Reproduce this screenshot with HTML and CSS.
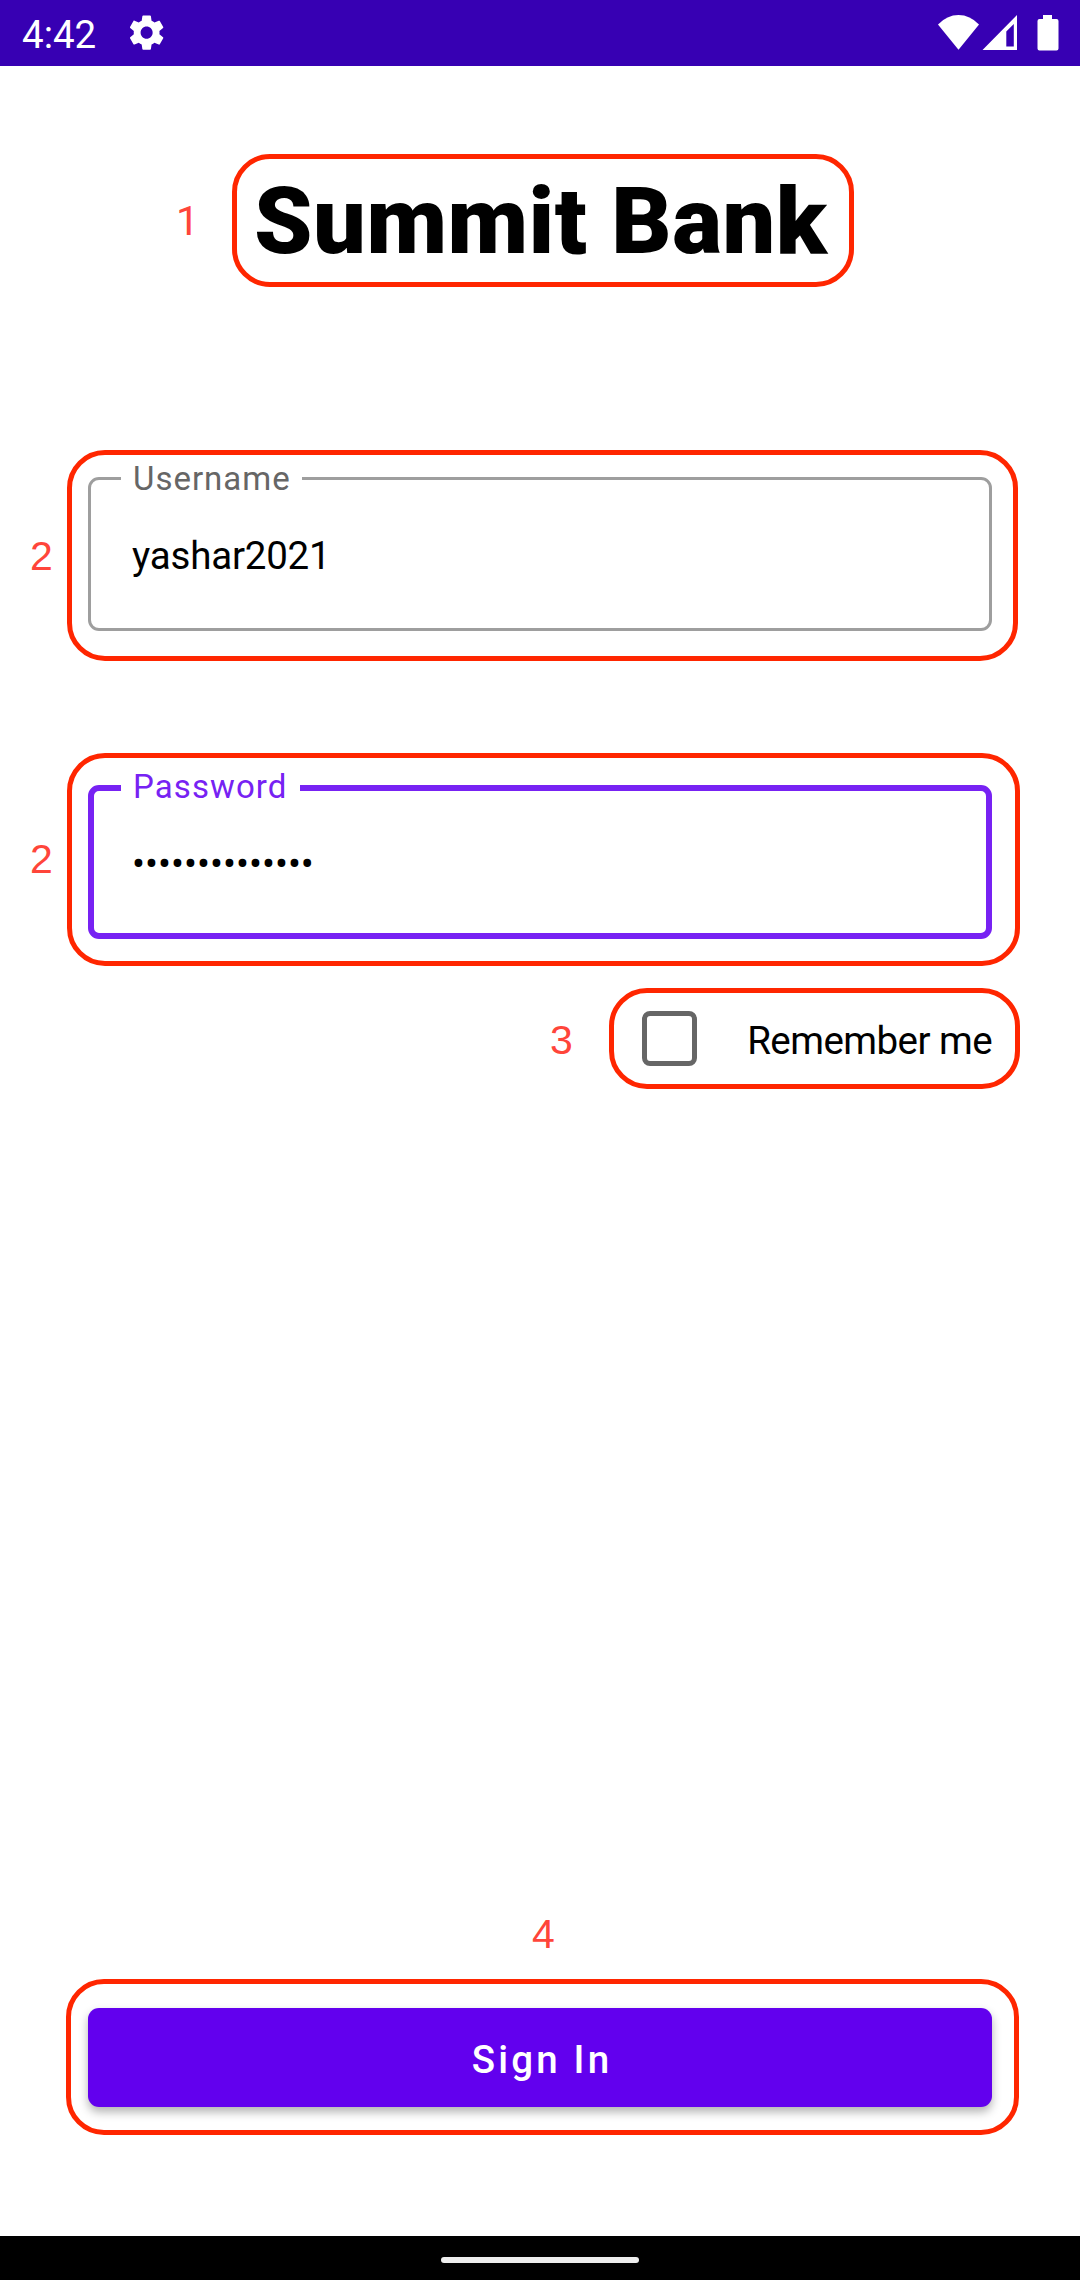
FILE: index.html
```html
<!DOCTYPE html>
<html lang="en">
<head>
<meta charset="utf-8">
<title>Summit Bank</title>
<link rel="stylesheet" href="styles.css">
</head>
<body>
<div class="screen">
  <header class="status-bar">
    <span class="clock">4:42</span>
    <svg class="gear" viewBox="0 0 24 24" aria-hidden="true"><path d="M19.43 12.98c.04-.32.07-.64.07-.98s-.03-.66-.07-.98l2.11-1.65c.19-.15.24-.42.12-.64l-2-3.46c-.12-.22-.39-.3-.61-.22l-2.49 1c-.52-.4-1.08-.73-1.69-.98l-.38-2.65C14.46 2.18 14.25 2 14 2h-4c-.25 0-.46.18-.49.42l-.38 2.65c-.61.25-1.17.59-1.69.98l-2.49-1c-.23-.09-.49 0-.61.22l-2 3.46c-.13.22-.07.49.12.64l2.11 1.65c-.04.32-.07.65-.07.98s.03.66.07.98l-2.11 1.65c-.19.15-.24.42-.12.64l2 3.46c.12.22.39.3.61.22l2.49-1c.52.4 1.08.73 1.69.98l.38 2.65c.03.24.24.42.49.42h4c.25 0 .46-.18.49-.42l.38-2.65c.61-.25 1.17-.59 1.69-.98l2.49 1c.23.09.49 0 .61-.22l2-3.46c.12-.22.07-.49-.12-.64l-2.11-1.65zM12 15.5c-1.93 0-3.5-1.57-3.5-3.5s1.57-3.5 3.5-3.5 3.5 1.57 3.5 3.5-1.57 3.5-3.5 3.5z"/></svg>
    <svg class="signals" viewBox="0 0 122 36" aria-hidden="true">
      <path d="M0 9.5Q9 0 20.500 0T41 9.500L20.500 34.700Z"/>
      <path fill-rule="evenodd" d="M44.500 35L79 0V35ZM68.300 16.500V31.500H75.800V9Z"/>
      <path d="M105 0h9v4h4.500q2 0 2 2v27.500q0 2-2 2h-17q-2 0-2-2V6q0-2 2-2h3.500z"/>
    </svg>
  </header>

  <main class="content">
    <div class="marked title-block">
      <h1 class="title">Summit Bank</h1>
      <span class="marker"></span><span class="num">1</span>
    </div>

    <div class="marked field-block username">
      <fieldset class="field">
        <legend>Username</legend>
        <span class="value">yashar2021</span>
      </fieldset>
      <span class="marker"></span><span class="num">2</span>
    </div>

    <div class="marked field-block password">
      <fieldset class="field focused">
        <legend>Password</legend>
        <span class="value">••••••••••••••</span>
      </fieldset>
      <span class="marker"></span><span class="num">2</span>
    </div>

    <div class="marked remember">
      <span class="checkbox"></span>
      <span class="remember-label">Remember me</span>
      <span class="marker"></span><span class="num">3</span>
    </div>

    <div class="marked signin">
      <button class="button" type="button">Sign In</button>
      <span class="marker"></span><span class="num">4</span>
    </div>
  </main>

  <footer class="nav-bar"><span class="handle"></span></footer>
</div>
</body>
</html>
```

FILE: styles.css
```css
* { box-sizing: border-box; }

body {
  margin: 0;
  background: #fff;
  color: #000;
  font-family: Roboto, sans-serif;
}

.screen {
  width: 1080px;
  height: 2280px;
  display: flex;
  flex-direction: column;
}

/* System status bar */
.status-bar {
  height: 66px;
  flex: none;
  display: flex;
  align-items: center;
  padding: 0 20px 0 22px;
  background: #3700b3;
  color: #fff;
}
.status-bar svg { fill: #fff; }
.clock { width: 104px; font-size: 38.500px; line-height: 66px; padding-top: 3px; }
.gear { width: 41.25px; height: 41.25px; }
.signals { width: 122px; height: 36px; margin-left: auto; }

/* Login form */
.content {
  flex: 1;
  display: flex;
  flex-direction: column;
  padding: 0 88px;
}

.title-block { margin: 99px 0 0 166px; width: 576px; height: 110px; }
.title {
  margin: 0;
  font-size: 93.5px;
  line-height: 112px;
  font-weight: 900;
  letter-spacing: .55px;
  white-space: nowrap;
}

.field-block { height: 165px; }
.username { margin-top: 191px; }
.password { margin-top: 143px; }
.field {
  margin: 0;
  height: 165px;
  padding: 0 0 0 41px;
  border: 3px solid #9e9e9e;
  border-radius: 11px;
  min-width: 0;
}
.field legend {
  margin-left: -11px;
  padding: 0 11px 0 12px;
  height: 25px;
  font-size: 33px;
  line-height: 25px;
  letter-spacing: 1px;
  color: #666;
}
.value {
  display: block;
  margin-top: 42px;
  font-size: 38.500px;
  line-height: 46px;
  letter-spacing: -.2px;
}
.focused { border: 6px solid #7722f3; padding-left: 38px; }
.focused legend { height: 28px; padding-right: 12px; letter-spacing: 1.1px; color: #7722f3; }
.focused .value { margin-top: 39px; letter-spacing: 0; }

.remember {
  align-self: flex-end;
  margin-top: 72px;
  width: 350px;
  height: 55px;
  display: flex;
  align-items: center;
  justify-content: space-between;
}
.checkbox { width: 55px; height: 55px; border: 5px solid #666; border-radius: 8px; }
.remember-label {
  font-size: 38.500px;
  line-height: 55px;
  letter-spacing: -.55px;
  padding-top: 3px;
  white-space: nowrap;
}

.signin { margin-top: auto; margin-bottom: 129px; }
.button {
  display: block;
  width: 100%;
  height: 99px;
  padding: 6px 0 0 4px;
  border: 0;
  border-radius: 11px;
  background: #6200ee;
  color: #fff;
  font: 500 38.500px/1 Roboto, sans-serif;
  letter-spacing: 3.2px;
  box-shadow: 0 5px 10px rgba(0, 0, 0, .3);
}

/* Numbered callouts drawn over the form */
.marked { position: relative; }
.marker {
  position: absolute;
  border: 5px solid #ff2600;
  border-radius: 38px;
}
.num {
  position: absolute;
  font-family: "Liberation Sans", sans-serif;
  font-size: 41px;
  line-height: 40px;
  color: #ff453a;
}
.title-block .marker { inset: -11px -24px -12px -22px; }
.title-block .num { left: -78px; top: 36px; font-family: Roboto, sans-serif; }
.username .marker { inset: -16px -26px -30px -21px; }
.username .num { left: -58px; top: 70px; }
.password .marker { inset: -21px -28px -27px -21px; }
.password .num { left: -58px; top: 65px; }
.remember .marker { inset: -23px -28px -23px -33px; }
.remember .num { left: -92px; top: 9px; }
.signin .marker { inset: -29px -27px -28px -22px; }
.signin .num { left: 444px; top: -94px; }

/* Gesture navigation */
.nav-bar {
  flex: none;
  height: 44px;
  display: flex;
  align-items: center;
  justify-content: center;
  background: #000;
}
.handle { width: 198px; height: 6px; margin-top: 4px; border-radius: 3px; background: #eee; }
```
